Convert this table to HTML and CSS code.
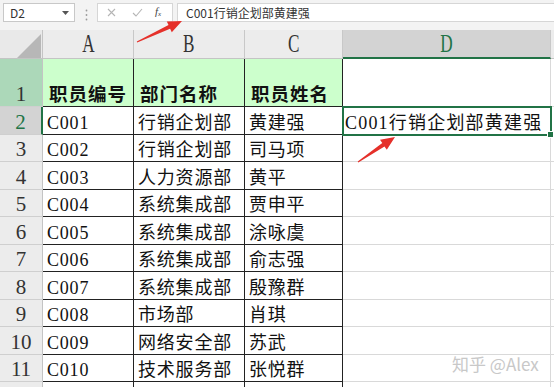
FILE: index.html
```html
<!DOCTYPE html>
<html>
<head>
<meta charset="utf-8">
<link rel="stylesheet" href="styles.css">
</head>
<body>
<div class="app">
  <div class="toolbar">
    <div class="namebox">
      <span class="ref">D2</span>
      <svg class="caret" width="7" height="4" viewBox="0 0 7 4"><polygon points="0,0 7,0 3.5,4" fill="#555"/></svg>
    </div>
    <svg class="sep" width="3" height="12" viewBox="0 0 3 12"><circle cx="1.5" cy="1.5" r="0.9" fill="#9a9a9a"/><circle cx="1.5" cy="6" r="0.9" fill="#9a9a9a"/><circle cx="1.5" cy="10.5" r="0.9" fill="#9a9a9a"/></svg>
    <div class="fnbox">
      <svg class="ico" width="9" height="9" viewBox="0 0 9 9"><path d="M1 1 L8 8 M8 1 L1 8" stroke="#b5b5b5" stroke-width="1.1" fill="none"/></svg>
      <svg class="ico" width="11" height="9" viewBox="0 0 11 9"><path d="M1 5 L4 8 L10 1" stroke="#b5b5b5" stroke-width="1.1" fill="none"/></svg>
      <span class="fx">f<sub>x</sub></span>
    </div>
    <div class="formula">C001行销企划部黄建强</div>
  </div>

  <div class="sheet">
    <div class="corner"><div class="tri"></div></div>
    <div class="ch"><span>A</span></div>
    <div class="ch"><span>B</span></div>
    <div class="ch"><span>C</span></div>
    <div class="ch sel"><span>D</span></div>
    <div class="ch end"></div>

    <div class="rh g">1</div>
    <div class="c h">职员编号</div>
    <div class="c h">部门名称</div>
    <div class="c h">职员姓名</div>
    <div class="c d"></div>
    <div class="c e"></div>

    <div class="rh sel">2</div>
    <div class="c">C001</div>
    <div class="c">行销企划部</div>
    <div class="c">黄建强</div>
    <div class="c d active">C001行销企划部黄建强</div>
    <div class="c e"></div>

    <div class="rh">3</div>
    <div class="c">C002</div>
    <div class="c">行销企划部</div>
    <div class="c">司马项</div>
    <div class="c d"></div>
    <div class="c e"></div>

    <div class="rh">4</div>
    <div class="c">C003</div>
    <div class="c">人力资源部</div>
    <div class="c">黄平</div>
    <div class="c d"></div>
    <div class="c e"></div>

    <div class="rh">5</div>
    <div class="c">C004</div>
    <div class="c">系统集成部</div>
    <div class="c">贾申平</div>
    <div class="c d"></div>
    <div class="c e"></div>

    <div class="rh">6</div>
    <div class="c">C005</div>
    <div class="c">系统集成部</div>
    <div class="c">涂咏虞</div>
    <div class="c d"></div>
    <div class="c e"></div>

    <div class="rh">7</div>
    <div class="c">C006</div>
    <div class="c">系统集成部</div>
    <div class="c">俞志强</div>
    <div class="c d"></div>
    <div class="c e"></div>

    <div class="rh">8</div>
    <div class="c">C007</div>
    <div class="c">系统集成部</div>
    <div class="c">殷豫群</div>
    <div class="c d"></div>
    <div class="c e"></div>

    <div class="rh">9</div>
    <div class="c">C008</div>
    <div class="c">市场部</div>
    <div class="c">肖琪</div>
    <div class="c d"></div>
    <div class="c e"></div>

    <div class="rh">10</div>
    <div class="c">C009</div>
    <div class="c">网络安全部</div>
    <div class="c">苏武</div>
    <div class="c d"></div>
    <div class="c e"></div>

    <div class="rh">11</div>
    <div class="c">C010</div>
    <div class="c">技术服务部</div>
    <div class="c">张悦群</div>
    <div class="c d"></div>
    <div class="c e"></div>

    <div class="rh"></div>
    <div class="c l"></div>
    <div class="c l"></div>
    <div class="c l"></div>
    <div class="c d"></div>
    <div class="c e"></div>
  </div>

  <svg class="arrows" width="554" height="387" viewBox="0 0 554 387">
    <polygon fill="#e5302a" points="137.2,42.5 170.1,28.7 171.8,32.3 182,21 166.8,21.5 168.5,25.1 136.8,41.5"/>
    <polygon fill="#e5302a" points="358.3,162.4 384.5,146.5 386.8,149.8 395,137 380.0,139.8 382.3,143.1 357.7,161.6"/>
  </svg>
  <div class="watermark">知乎 @Alex</div>
</div>
</body>
</html>
```

FILE: styles.css
```css
* { box-sizing: border-box; }
html, body { margin: 0; padding: 0; }
body { background: #ffffff; width: 554px; height: 387px; overflow: hidden; }

.app { position: relative; width: 554px; height: 387px; overflow: hidden; }

.toolbar {
  height: 30px;
  background: #f3f3f3;
  display: flex;
  align-items: flex-start;
  padding-top: 3px;
  padding-left: 3px;
  font-family: "Noto Sans CJK SC", "Noto Sans", sans-serif;
  font-size: 12px;
  color: #333;
}
.namebox {
  width: 72px;
  height: 19px;
  background: #fff;
  border: 1px solid #c8c8c8;
  display: flex;
  align-items: center;
  justify-content: space-between;
  padding: 0 5px 0 6px;
}
.ref { line-height: 17px; }
.sep { margin: 6px 0 0 10px; }
.fnbox {
  margin-left: 9px;
  width: 76px;
  height: 19px;
  background: #fff;
  border: 1px solid #d6d6d6;
  display: flex;
  align-items: center;
  padding-left: 9px;
  gap: 16px;
}
.ico { display: block; }
.fx {
  font-family: "Liberation Serif", serif;
  font-style: italic;
  font-size: 11px;
  color: #444;
  margin-left: -4px;
  line-height: 10px;
}
.fx sub { font-size: 7px; vertical-align: -1px; }
.formula {
  margin-left: 4px;
  flex: 1;
  height: 19px;
  background: #fff;
  border: 1px solid #d6d6d6;
  border-right: none;
  padding-left: 8px;
  line-height: 17px;
  color: #333;
}

.sheet {
  display: grid;
  grid-template-columns: 43px 91px 111px 98px 208px 1fr;
  grid-template-rows: 29px 48px repeat(10, 27.5px) 10px;
  font-family: "Liberation Serif", "Noto Sans CJK SC", serif;
  color: #111;
}

.corner {
  background: #e9e9e9;
  border-right: 1px solid #c4c4c4;
  border-bottom: 1px solid #c4c4c4;
  position: relative;
}
.tri {
  position: absolute;
  left: 17px;
  top: 4px;
  width: 24px;
  height: 24px;
  background: #b7b7b7;
  clip-path: polygon(100% 0, 100% 100%, 0 100%);
}
.ch {
  background: #ececec;
  border-right: 1px solid #c8c8c8;
  border-bottom: 1px solid #c4c4c4;
  display: flex;
  justify-content: center;
  align-items: center;
  font-size: 26px;
  color: #333;
}
.ch span { display: inline-block; transform: scaleX(0.66); line-height: 26px; }
.ch.sel { background: #d3d3d3; color: #217346; border-bottom: 2px solid #217346; }
.ch.end { background: #ececec; border-right: none; }

.rh {
  background: #ececec;
  border-right: 1px solid #c4c4c4;
  border-bottom: 1px solid #cfcfcf;
  display: flex;
  justify-content: center;
  align-items: flex-end;
  font-size: 21px;
  line-height: 24px;
  color: #333;
}
.rh.g { background: #acd8b9; }
.rh.sel { background: #d3d3d3; color: #217346; border-right: 2px solid #217346; }

.c {
  border-right: 1px solid #222;
  border-bottom: 1px solid #222;
  display: flex;
  align-items: flex-end;
  padding-left: 4px;
  font-size: 18px;
  letter-spacing: 0.8px;
  line-height: 22px;
  white-space: nowrap;
  overflow: visible;
}
.c.h {
  background: #ccffcc;
  font-weight: bold;
  font-size: 18.5px;
  letter-spacing: 1px;
  padding-left: 6px;
  line-height: 22px;
}
.c.d { border-right: 1px solid #d9d9d9; border-bottom: 1px solid #d9d9d9; padding-left: 2px; letter-spacing: 1.2px; }
.c.e { border-right: none; border-bottom: 1px solid #d9d9d9; }
.c.l { border-bottom: none; }

.c.active {
  position: relative;
  outline: 2px solid #217346;
  outline-offset: -1px;
  z-index: 1;
}
.c.active::after {
  content: "";
  position: absolute;
  right: -4px;
  bottom: -4px;
  width: 5px;
  height: 5px;
  background: #217346;
  border: 1px solid #fff;
}

.arrows { position: absolute; left: 0; top: 0; pointer-events: none; z-index: 5; }
.watermark {
  position: absolute;
  left: 452px;
  top: 353px;
  font-family: "Noto Sans CJK SC", "Noto Sans", sans-serif;
  font-size: 17px;
  line-height: 22px;
  color: #c8c8c8;
  z-index: 6;
}
```
